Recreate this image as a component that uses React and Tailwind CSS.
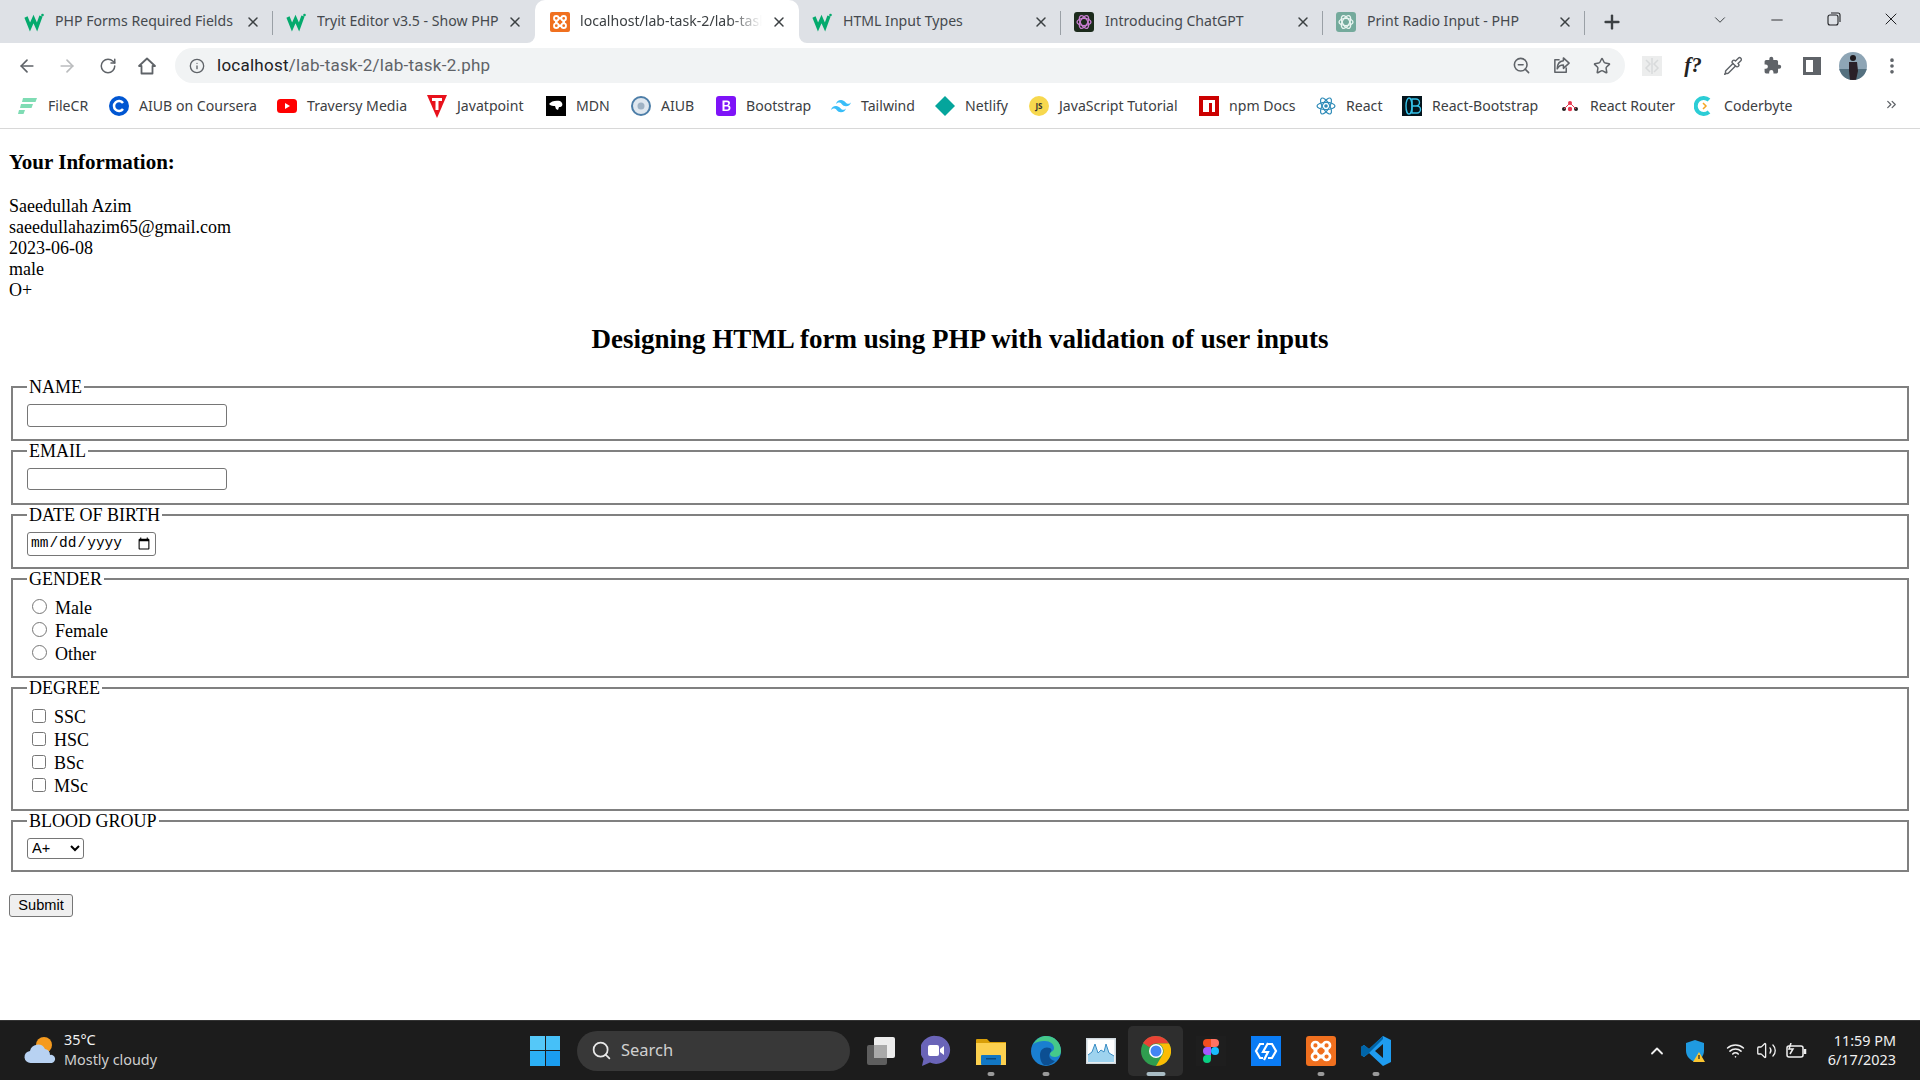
import { ArrowLeft, ArrowRight, RotateCw, Info, ZoomOut, Star, Pipette, X, Plus, ChevronDown, Minus, MoreVertical, Search, ChevronUp, Wifi, Volume2, ChevronsRight } from "lucide-react";

const ui = "font-['Noto_Sans',sans-serif]";

function W3() {
  return (
    <svg width="20" height="20" viewBox="0 0 20 20">
      <polyline points="2,5 6,15 9.5,7 13,15 17,4" fill="none" stroke="#04aa6d" strokeWidth="3.4" strokeLinejoin="miter" />
      <circle cx="18.5" cy="3" r="1.3" fill="#04aa6d" />
    </svg>
  );
}

function Xampp({ size = 20 }) {
  return (
    <svg width={size} height={size} viewBox="0 0 20 20">
      <rect width="20" height="20" rx="2" fill="#f0701f" />
      <g fill="none" stroke="#fff" strokeWidth="1.800">
        <circle cx="6.300" cy="6.300" r="2.300" />
        <circle cx="13.700" cy="6.300" r="2.300" />
        <circle cx="6.300" cy="13.700" r="2.300" />
        <circle cx="13.700" cy="13.700" r="2.300" />
        <path d="M8.600 6.300h2.800M8.600 13.700h2.800M6.300 8.600v2.800M13.700 8.600v2.800" strokeWidth="2.600" />
      </g>
    </svg>
  );
}

function GptIcon({ bg, color }) {
  return (
    <svg width="20" height="20" viewBox="0 0 20 20">
      <rect width="20" height="20" rx="3" fill={bg} />
      <g fill="none" stroke={color} strokeWidth="1.300">
        <ellipse cx="10" cy="10" rx="7" ry="3.600" />
        <ellipse cx="10" cy="10" rx="7" ry="3.600" transform="rotate(60 10 10)" />
        <ellipse cx="10" cy="10" rx="7" ry="3.600" transform="rotate(120 10 10)" />
      </g>
    </svg>
  );
}

const tabs = [
  { title: "PHP Forms Required Fields", icon: <W3 />, sep: true },
  { title: "Tryit Editor v3.5 - Show PHP", icon: <W3 /> },
  { title: "localhost/lab-task-2/lab-task-2.php", icon: <Xampp />, active: true },
  { title: "HTML Input Types", icon: <W3 />, sep: true },
  { title: "Introducing ChatGPT", icon: <GptIcon bg="#1c2b1c" color="#c77dd0" />, sep: true },
  { title: "Print Radio Input - PHP", icon: <GptIcon bg="#74aa9c" color="#e8f4f0" />, sep: true },
];

function Tab({ tab }) {
  return (
    <div className={tab.active
      ? "relative flex items-center w-[264px] h-[43px] pl-[15px] pr-[12px] bg-white rounded-t-[10px]"
      : "relative flex items-center w-[262px] h-[43px] pl-[13px] pr-[12px]"}>
      {tab.active && (
        <>
          <div className="absolute left-[-8px] bottom-0 w-[8px] h-[8px] bg-white">
            <div className="w-full h-full bg-[#dee1e6] rounded-br-[8px]"></div>
          </div>
          <div className="absolute right-[-8px] bottom-0 w-[8px] h-[8px] bg-white">
            <div className="w-full h-full bg-[#dee1e6] rounded-bl-[8px]"></div>
          </div>
        </>
      )}
      <div className="w-[20px] h-[20px] shrink-0">{tab.icon}</div>
      <div className={tab.active
        ? "ml-[10px] mr-[9px] -mt-[2px] flex-1 overflow-hidden whitespace-nowrap text-[14.1px] text-[#3c4043] [mask-image:linear-gradient(to_right,black_82%,transparent)]"
        : "ml-[11px] -mt-[2px] flex-1 overflow-hidden whitespace-nowrap text-[14.1px] text-[#45494e]"}>{tab.title}</div>
      <X size={16} strokeWidth={2.2} className="shrink-0 text-[#3c4043]" />
      {tab.sep && <div className="absolute right-0 top-[11px] w-px h-[24px] bg-[#9aa0a6]"></div>}
    </div>
  );
}

function TabStrip() {
  return (
    <div className="flex items-center h-[43px] bg-[#dee1e6] pl-[11px]">
      {tabs.map((t) => <Tab key={t.title} tab={t} />)}
      <Plus size={22} strokeWidth={2.6} className="ml-[16px] text-[#3c4043]" />
      <ChevronDown size={18} strokeWidth={1.3} className="ml-[88px] -mt-[4px] text-[#3c4043]" />
      <Minus size={18} strokeWidth={1.2} className="ml-[39px] -mt-[4px] text-[#202124]" />
      <svg width="14" height="14" viewBox="0 0 14 14" className="ml-[41px] -mt-[6px]" fill="none" stroke="#202124" strokeWidth="1.100">
        <rect x="1" y="3" width="10" height="10" rx="2" />
        <path d="M4 1h7a2 2 0 0 1 2 2v7" />
      </svg>
      <X size={20} strokeWidth={1.2} className="ml-[40px] -mt-[6px] text-[#202124]" />
    </div>
  );
}

function Toolbar() {
  return (
    <div className="flex items-center h-[48px] bg-white pb-[3px] text-[#5f6368]">
      <ArrowLeft size={20} strokeWidth={2} className="ml-[17px]" />
      <ArrowRight size={20} strokeWidth={2} className="ml-[20px] text-[#babcbe]" />
      <RotateCw size={18} strokeWidth={2} className="ml-[22px]" />
      <svg width="20" height="20" viewBox="0 0 20 20" className="ml-[20px]" fill="none" stroke="#5f6368" strokeWidth="1.800" strokeLinejoin="round">
        <path d="M10 2.500L2 10h2.500v7.500h11V10H18z" />
      </svg>
      <div className="flex items-center ml-[18px] w-[1450px] h-[35px] rounded-full bg-[#f1f3f4] pl-[14px]">
        <Info size={16} strokeWidth={2} />
        <div className="ml-[12px] text-[17px] tracking-[0.25px] text-[#5f6368] font-['Roboto',sans-serif]">
          <span className="text-[#202124]">localhost</span>/lab-task-2/lab-task-2.php
        </div>
        <ZoomOut size={19} strokeWidth={2} className="ml-auto" />
        <svg width="19" height="19" viewBox="0 0 20 20" className="ml-[21px]" fill="none" stroke="#5f6368" strokeWidth="1.600" strokeLinejoin="round">
          <path d="M8 4H3v13h12v-5" />
          <path d="M12 2l6 5.500-6 5.500v-3.500c-3 0-5 1-6.500 4 0-4.500 2-8 6.500-8.500z" />
        </svg>
        <Star size={18} strokeWidth={2} className="ml-[22px] mr-[14px]" />
      </div>
      <svg width="20" height="20" viewBox="0 0 20 20" className="ml-[17px]">
        <rect width="20" height="20" fill="#eceded" />
        <path d="M4 4l4 4-4 4 4 4M16 4l-4 4 4 4-4 4M10 2v16" fill="none" stroke="#d8dadb" strokeWidth="1.500" />
      </svg>
      <div className="ml-[21px] w-[20px] text-center text-[21px] italic font-bold text-[#222] font-['Liberation_Serif',serif]">f?</div>
      <Pipette size={20} strokeWidth={1.700} className="ml-[20px]" />
      <svg width="19" height="19" viewBox="0 0 24 24" className="ml-[20px]" fill="#5f6368">
        <path d="M20.500 11H19V7a2 2 0 0 0-2-2h-4V3.500a2.500 2.500 0 0 0-5 0V5H4a2 2 0 0 0-2 2v3.800h1.500a2.700 2.700 0 0 1 0 5.400H2V20a2 2 0 0 0 2 2h3.800v-1.500a2.700 2.700 0 0 1 5.400 0V22H17a2 2 0 0 0 2-2v-4h1.500a2.500 2.500 0 0 0 0-5z" />
      </svg>
      <svg width="18" height="18" viewBox="0 0 18 18" className="ml-[21px]">
        <path d="M0 0h18v18H0z M3 3v12h7V3z" fill="#5f6368" fillRule="evenodd" />
      </svg>
      <svg width="28" height="28" viewBox="0 0 28 28" className="ml-[18px]">
        <clipPath id="avatar"><circle cx="14" cy="14" r="14" /></clipPath>
        <g clipPath="url(#avatar)">
          <rect width="28" height="28" fill="#8ea5b5" />
          <rect y="17" width="28" height="11" fill="#54707f" />
          <circle cx="14" cy="6" r="3" fill="#1f1a1e" />
          <path d="M10 10h8l1 9-2 9h-6l-1-9z" fill="#2a2028" />
        </g>
      </svg>
      <MoreVertical size={20} strokeWidth={2.4} className="ml-[15px]" />
    </div>
  );
}

function Globe() {
  return (
    <svg width="20" height="20" viewBox="0 0 20 20">
      <circle cx="10" cy="10" r="9" fill="#dfe7ef" stroke="#4d7ea8" strokeWidth="2" />
      <circle cx="10" cy="10" r="3.500" fill="#9fb2c4" />
    </svg>
  );
}

const bookmarks = [
  { w: "w-[91px]", label: "FileCR", icon: (
    <svg width="20" height="20" viewBox="0 0 20 20"><path d="M5 2h14l-1.500 4H4zM3 8h12l-1.500 4H2zM1 14h6l-1.500 4H0z" fill="#7fdcb4" /></svg>
  ) },
  { w: "w-[168px]", label: "AIUB on Coursera", icon: (
    <svg width="20" height="20" viewBox="0 0 20 20"><circle cx="10" cy="10" r="10" fill="#0056d2" /><path d="M14 7a5 5 0 1 0 0 6" fill="none" stroke="#fff" strokeWidth="2.500" /></svg>
  ) },
  { w: "w-[150px]", label: "Traversy Media", icon: (
    <svg width="20" height="20" viewBox="0 0 20 20"><rect y="3" width="20" height="14" rx="3.500" fill="#f00" /><path d="M8 7l5 3-5 3z" fill="#fff" /></svg>
  ) },
  { w: "w-[119px]", label: "Javatpoint", icon: (
    <svg width="20" height="24" viewBox="0 0 20 24"><path d="M0 1h20L10 24z" fill="#e8111c" /><path d="M5 4h10v3h-3.500v9h-3V7H5z" fill="#fff" /></svg>
  ) },
  { w: "w-[85px]", label: "MDN", icon: (
    <svg width="20" height="20" viewBox="0 0 20 20"><rect width="20" height="20" fill="#000" /><path d="M3 8c2-3 7-4 11-3 2 1 3 3 2 5-1 1-2 1-3 1l-1 3-2-1-1-3c-2 0-4 0-6-2z" fill="#fff" /></svg>
  ) },
  { w: "w-[85px]", label: "AIUB", icon: <Globe /> },
  { w: "w-[115px]", label: "Bootstrap", icon: (
    <svg width="20" height="20" viewBox="0 0 20 20"><rect width="20" height="20" rx="3" fill="#7e13f8" /><path d="M6.500 4.500h4.500c2 0 3 1 3 2.500 0 1.200-.7 2-1.700 2.300 1.300.2 2.200 1.200 2.200 2.600 0 1.800-1.300 3-3.500 3H6.500zM8.500 6.200v2.700h2c1.200 0 1.700-.5 1.700-1.400 0-.8-.6-1.300-1.600-1.300zM8.500 10.500v3h2.300c1.300 0 1.900-.6 1.900-1.500s-.7-1.500-2-1.500z" fill="#fff" fillRule="evenodd" /></svg>
  ) },
  { w: "w-[104px]", label: "Tailwind", icon: (
    <svg width="20" height="20" viewBox="0 0 20 20"><path d="M10 4c-2.700 0-4.300 1.300-5 4 1-1.300 2.200-1.800 3.500-1.500 1 .2 1.600.9 2.300 1.700 1 1 2.200 2 4.200 2 2.700 0 4.300-1.300 5-4-1 1.300-2.200 1.800-3.500 1.500-1-.2-1.600-.9-2.300-1.700C13.200 5 12 4 10 4zM5 10c-2.700 0-4.300 1.300-5 4 1-1.300 2.200-1.800 3.500-1.500 1 .2 1.600.9 2.300 1.700 1 1 2.200 2 4.200 2 2.700 0 4.300-1.300 5-4-1 1.300-2.200 1.800-3.500 1.500-1-.2-1.600-.9-2.300-1.700C8.200 11 7 10 5 10z" fill="#38bdf8" /></svg>
  ) },
  { w: "w-[94px]", label: "Netlify", icon: (
    <svg width="20" height="20" viewBox="0 0 20 20"><path d="M10 0l10 10-10 10L0 10z" fill="#05a59c" /></svg>
  ) },
  { w: "w-[170px]", label: "JavaScript Tutorial", icon: (
    <div className="flex items-center justify-center w-[20px] h-[20px] rounded-full bg-[#f7d84e] text-[8px] font-bold text-[#333]">JS</div>
  ) },
  { w: "w-[117px]", label: "npm Docs", icon: (
    <svg width="20" height="20" viewBox="0 0 20 20"><path d="M0 0h20v20H0z M4 4v12h6V7h3v9h3V4z" fill="#c00" fillRule="evenodd" /></svg>
  ) },
  { w: "w-[86px]", label: "React", icon: (
    <svg width="20" height="20" viewBox="0 0 20 20"><g fill="none" stroke="#2e8bb8" strokeWidth="1.200"><ellipse cx="10" cy="10" rx="9" ry="3.600" /><ellipse cx="10" cy="10" rx="9" ry="3.600" transform="rotate(60 10 10)" /><ellipse cx="10" cy="10" rx="9" ry="3.600" transform="rotate(120 10 10)" /></g><circle cx="10" cy="10" r="1.800" fill="#2e8bb8" /></svg>
  ) },
  { w: "w-[158px]", label: "React-Bootstrap", icon: (
    <svg width="20" height="20" viewBox="0 0 20 20"><rect width="20" height="20" fill="#04141c" /><g fill="none" stroke="#35c1e8" strokeWidth="1.400"><ellipse cx="7" cy="10" rx="3" ry="8" /><path d="M10 3h4a3 3 0 0 1 0 7h-4h5a3 3 0 0 1 0 7h-5z" /></g></svg>
  ) },
  { w: "w-[134px]", label: "React Router", icon: (
    <svg width="20" height="20" viewBox="0 0 20 20"><circle cx="4" cy="13" r="2" fill="#222" /><circle cx="16" cy="13" r="2" fill="#222" /><circle cx="10" cy="13" r="2.200" fill="#e8384f" /><circle cx="10" cy="7" r="2" fill="#e8384f" /><path d="M10 7l-6 6M10 7l6 6" stroke="#e8384f" strokeWidth="1" /></svg>
  ) },
  { w: "w-[165px]", label: "Coderbyte", icon: (
    <svg width="20" height="20" viewBox="0 0 20 20"><path d="M15 4a8 8 0 1 0 0 12" fill="none" stroke="#2ccdd6" strokeWidth="4" /><path d="M9 7l3 3-3 3" fill="none" stroke="#f5a623" strokeWidth="1.500" /></svg>
  ) },
];

function Bookmarks() {
  return (
    <div className="flex items-center h-[37px] pb-[8px] bg-white">
      <div className="w-[18px]"></div>
      {bookmarks.map((b) => (
        <div key={b.label} className={`flex items-center gap-[10px] shrink-0 ${b.w}`}>
          <div className="flex items-center justify-center w-[20px] h-[24px] shrink-0">{b.icon}</div>
          <span className="text-[14.1px] text-[#3c4043] whitespace-nowrap">{b.label}</span>
        </div>
      ))}
      <ChevronsRight size={15} strokeWidth={2} className="ml-[25px] -mt-[2px] text-[#5f6368]" />
    </div>
  );
}

function Field({ title, className, children }) {
  return (
    <fieldset className={`mx-[2px] border-2 border-[#808080] px-[14px] ${className}`}>
      <legend className="px-[2px] h-[20px] leading-[20px] text-[18px]">{title}</legend>
      {children}
    </fieldset>
  );
}

function Page() {
  return (
    <div className="px-[9px] font-['Liberation_Serif',serif] text-[18px] text-black">
      <h3 className="pt-[21px] h-[45px] text-[21px] leading-[24px] font-bold">Your Information:</h3>
      <div className="mt-[22px] leading-[21px]">
        <div>Saeedullah Azim</div>
        <div>saeedullahazim65@gmail.com</div>
        <div>2023-06-08</div>
        <div>male</div>
        <div>O+</div>
      </div>
      <h2 className="mt-[23px] text-center text-[27px] leading-[30px] font-bold">Designing HTML form using PHP with validation of user inputs</h2>
      <div className="mt-[23px]">
        <Field title="NAME" className="pb-[12px]">
          <input type="text" className="block mt-[7px] w-[200px] h-[22.5px] border border-[#767676] rounded-[3px]" />
        </Field>
        <Field title="EMAIL" className="pb-[12.500px]">
          <input type="email" className="block mt-[7px] w-[200px] h-[22.5px] border border-[#767676] rounded-[3px]" />
        </Field>
        <Field title="DATE OF BIRTH" className="pb-[11px]">
          <input type="date" className="block mt-[7.5px] w-[129px] h-[24px] px-[2px] border border-[#767676] rounded-[3px] text-[14.5px] font-['Liberation_Mono',monospace]" />
        </Field>
        <Field title="GENDER" className="pb-[10.500px]">
          <div className="pt-[7.500px]">
            {["Male", "Female", "Other"].map((g) => (
              <label key={g} className="flex items-center h-[23px] pl-[5px]">
                <input type="radio" name="gender" className="w-[15px] h-[15px] mb-[3px]" />
                <span className="ml-[8px]">{g}</span>
              </label>
            ))}
          </div>
        </Field>
        <Field title="DEGREE" className="pb-[10.500px]">
          <div className="pt-[8px]">
            {["SSC", "HSC", "BSc", "MSc"].map((d) => (
              <label key={d} className="flex items-center h-[23px] pl-[5px]">
                <input type="checkbox" className="w-[14px] h-[14px] mb-[3px]" />
                <span className="ml-[8px]">{d}</span>
              </label>
            ))}
          </div>
        </Field>
        <Field title="BLOOD GROUP" className="pb-[11px]">
          <select className="block mt-[7.5px] w-[57px] h-[20.5px] border border-[#767676] rounded-[3px] text-[14.6px] font-['Liberation_Sans',sans-serif]">
            <option>A+</option>
          </select>
        </Field>
      </div>
      <button type="button" className="block mt-[22.500px] w-[64px] h-[23px] bg-[#efefef] border border-[#767676] rounded-[3px] text-[14.6px] font-['Liberation_Sans',sans-serif]">Submit</button>
    </div>
  );
}

const apps = [
  { id: "taskview", icon: (
    <svg width="30" height="30" viewBox="0 0 30 30"><rect x="1" y="9" width="20" height="20" rx="2" fill="#5e5e5e" /><rect x="8" y="1" width="21" height="21" rx="2" fill="#ececec" /><rect x="8" y="9" width="13" height="13" fill="#a9a9a9" /></svg>
  ) },
  { id: "chat", icon: (
    <svg width="30" height="32" viewBox="0 0 30 32"><path d="M15 1a14 14 0 1 1-6 26.600L1 31l1.500-7A14 14 0 0 1 15 1z" fill="#6a64b8" /><rect x="7" y="10" width="11" height="11" rx="2" fill="#fff" /><path d="M19 14l4-3v9l-4-3z" fill="#fff" /></svg>
  ) },
  { id: "explorer", dot: "w-[7px] bg-[#9a9a9a]", icon: (
    <svg width="30" height="30" viewBox="0 0 30 30"><path d="M0 4a1 1 0 0 1 1-1h10l3 3h16v5H0z" fill="#d99f08" /><rect y="7" width="30" height="22" fill="#fcd04f" /><rect x="5" y="19" width="20" height="10" rx="1" fill="#1277c4" /><rect x="10" y="22" width="10" height="1.500" fill="#0a4a80" /></svg>
  ) },
  { id: "edge", dot: "w-[7px] bg-[#9a9a9a]", icon: (
    <svg width="30" height="32" viewBox="0 0 30 32"><circle cx="15" cy="16" r="15" fill="#1a7fd0" /><path d="M2 10C5 3 11 1 15 1c8 0 15 6 15 15 0 3-2 6-6 6-3 0-5-1-5-3 0-3 4-2 4-6 0-4-4-7-9-7-5 0-10 1-12 4z" fill="#45c98a" /><path d="M9 20c0-6 5-9 10-7 2 1 2 3 0 5-2 3 0 7 5 8-3 3-7 5-11 4-3-2-4-6-4-10z" fill="#0c4f92" /></svg>
  ) },
  { id: "monitor", icon: (
    <svg width="30" height="26" viewBox="0 0 30 26"><rect width="30" height="26" fill="#cfd8de" /><rect x="1.500" y="1.500" width="27" height="23" fill="#fff" /><path d="M2 24V17l4-3 3-8 3 9 3-3 3 2 2-8 3 9 5 3v6z" fill="#9ed3ef" /><path d="M2 17l4-3 3-8 3 9 3-3 3 2 2-8 3 9 5 3" fill="none" stroke="#3a8dc5" strokeWidth="1" /></svg>
  ) },
  { id: "chrome", active: true, dot: "w-[19px] bg-[#a9bcc4]", icon: (
    <svg width="30" height="30" viewBox="0 0 30 30"><circle cx="15" cy="15" r="15" fill="#2f9e4f" /><path d="M15 0a15 15 0 0 1 13 7.500H15a7.500 7.500 0 0 0-6.500 3.750L2 7A15 15 0 0 1 15 0z" fill="#ea4335" /><path d="M28 7.500A15 15 0 0 1 15 30l6.500-11.250A7.500 7.500 0 0 0 15 7.500z" fill="#fbbc04" /><circle cx="15" cy="15" r="7" fill="#fff" /><circle cx="15" cy="15" r="5.500" fill="#4285f4" /></svg>
  ) },
  { id: "figma", icon: (
    <svg width="30" height="30" viewBox="0 0 30 30"><rect width="30" height="30" fill="#1e1e1e" /><path d="M11 3h4v8h-4a4 4 0 0 1 0-8z" fill="#f24e1e" /><path d="M15 3h4a4 4 0 0 1 0 8h-4z" fill="#ff7262" /><path d="M11 11h4v8h-4a4 4 0 0 1 0-8z" fill="#a259ff" /><circle cx="19" cy="15" r="4" fill="#1abcfe" /><path d="M11 19h4v4a4 4 0 1 1-4-4z" fill="#0acf83" /></svg>
  ) },
  { id: "tool", icon: (
    <svg width="30" height="30" viewBox="0 0 30 30"><rect width="30" height="30" fill="#0a7cf5" /><path d="M13 8H9l-4 7 4 7h3M17 8h4l4 7-4 7h-4M17 7l-5 9h5l-4 8" fill="none" stroke="#fff" strokeWidth="2.200" /></svg>
  ) },
  { id: "xampp", dot: "w-[7px] bg-[#9a9a9a]", icon: <Xampp size={30} /> },
  { id: "vscode", dot: "w-[7px] bg-[#9a9a9a]", icon: (
    <svg width="30" height="32" viewBox="0 0 30 32"><path d="M22 1l8 4v22l-8 4L8 18l-5 4-3-2v-8l3-2 5 4zM22 9l-8 7 8 7z" fill="#1f9cf0" fillRule="evenodd" /><path d="M8 14L3 10l-3 2v8l3 2 5-4 14-14V1z" fill="#0065a9" /></svg>
  ) },
];

function Taskbar() {
  return (
    <div className={`flex items-center h-[60px] bg-[#1c1c1c] border-t border-[#333] text-white ${ui}`}>
      <div className="flex items-center w-[530px] pl-[24px]">
        <svg width="32" height="30" viewBox="0 0 32 30">
          <circle cx="20" cy="9" r="8" fill="#f59a1e" />
          <path d="M7 27a6 6 0 0 1-1-12 8 8 0 0 1 15-2 6 6 0 0 1 5 6 4 4 0 0 1 2 8z" fill="#b8d2f2" />
        </svg>
        <div className="ml-[8px] -mt-[2px] text-[14.4px] leading-[20px]">
          <div className="text-[#f2f2f2]">35°C</div>
          <div className="text-[#cfcfcf]">Mostly cloudy</div>
        </div>
      </div>
      <div className="grid grid-cols-2 gap-[1px] w-[30px] h-[30px] shrink-0">
        <div className="bg-[#55c8f8]"></div>
        <div className="bg-[#46c0f8]"></div>
        <div className="bg-[#2cb0f5]"></div>
        <div className="bg-[#1a9df0]"></div>
      </div>
      <div className="flex items-center ml-[17px] w-[273px] h-[40px] rounded-full bg-[#383838] pl-[14px] shrink-0">
        <Search size={21} strokeWidth={2} className="text-[#e8e8e8]" />
        <span className="ml-[9px] text-[16.5px] text-[#d0d0d0]">Search</span>
      </div>
      <div className="flex ml-[3px]">
        {apps.map((a) => (
          <div key={a.id} className={a.active
            ? "relative flex items-center justify-center w-[55px] h-[50px] rounded-[5px] bg-[#2e2e2e]"
            : "relative flex items-center justify-center w-[55px] h-[50px]"}>
            {a.icon}
            {a.dot && <div className={`absolute bottom-[0px] left-1/2 -translate-x-1/2 h-[4px] rounded-full ${a.dot}`}></div>}
          </div>
        ))}
      </div>
      <div className="flex items-center ml-auto pr-[24px]">
        <ChevronUp size={20} strokeWidth={2.2} className="text-[#f0f0f0]" />
        <svg width="22" height="24" viewBox="0 0 22 24" className="ml-[19px]">
          <path d="M9 1l9 3v8c0 5-4 9-9 11-5-2-9-6-9-11V4z" fill="#1f9ae0" />
          <path d="M13 13l6 10H7z" fill="#fbc531" />
          <rect x="12.400" y="16" width="1.200" height="4" fill="#222" />
        </svg>
        <Wifi size={19} strokeWidth={2} className="ml-[18px] text-[#f0f0f0]" />
        <Volume2 size={21} strokeWidth={1.500} className="ml-[11px] text-[#f0f0f0]" />
        <svg width="21" height="16" viewBox="0 0 21 16" className="ml-[9px]" fill="none" stroke="#f0f0f0" strokeWidth="1.500">
          <rect x="1" y="3" width="16" height="11" rx="2" />
          <path d="M19 6v5" strokeWidth="2.500" />
          <path d="M5 0L3 6h4L4 11" strokeWidth="1.500" />
        </svg>
        <div className="ml-[19px] -mt-[2px] w-[70px] text-right text-[14.4px] leading-[19px] text-[#f0f0f0]">
          <div>11:59 PM</div>
          <div>6/17/2023</div>
        </div>
      </div>
    </div>
  );
}

export default function App() {
  return (
    <div className="flex flex-col w-[1920px] h-[1080px] overflow-hidden bg-white">
      <div className={`border-b border-[#d8d8d8] ${ui}`}>
        <TabStrip />
        <Toolbar />
        <Bookmarks />
      </div>
      <div className="flex-1 min-h-0">
        <Page />
      </div>
      <Taskbar />
    </div>
  );
}
